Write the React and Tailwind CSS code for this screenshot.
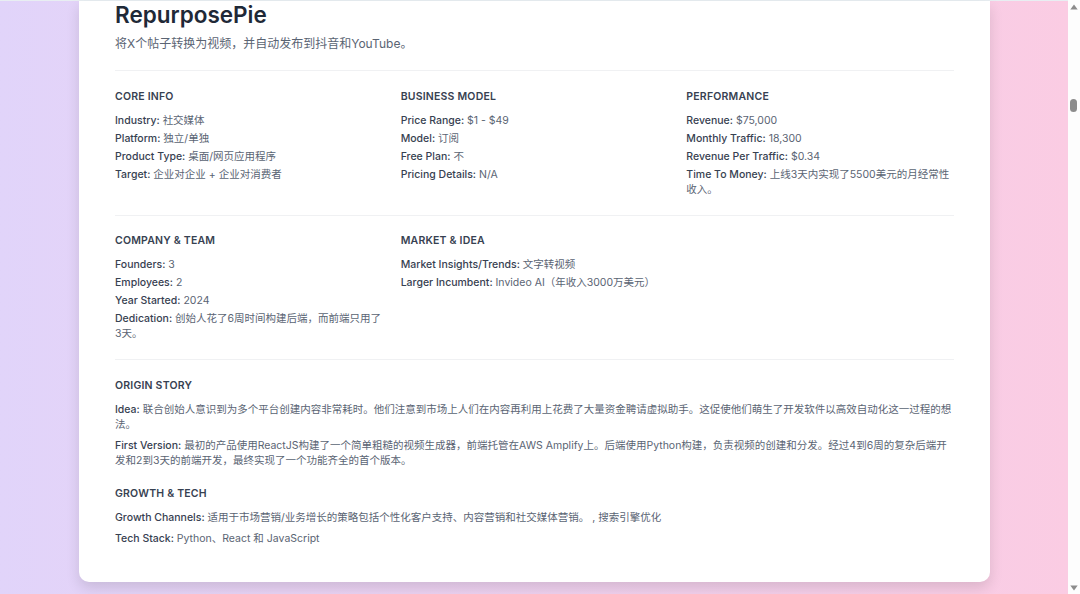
import React from "react";

const font = "font-['Inter','Noto_Sans_CJK_SC',sans-serif]";

const C = "\uFF0C";
const L = "\uFF08";
const R = "\uFF09";

function Row({ label, children }) {
  return (
    <p className="text-[10.5px] leading-[15px] text-[#5a6473]">
      <span className="font-medium text-[#374151]">{label}:</span> {children}
    </p>
  );
}

function Heading({ children }) {
  return <h3 className="mb-[7px] text-[10.5px] leading-[18px] font-semibold tracking-[0.2px] text-[#374151]">{children}</h3>;
}

function Section({ title, rows }) {
  return (
    <div>
      <Heading>{title}</Heading>
      <div className="flex flex-col gap-[3px]">
        {rows.map(([l, v]) => (
          <Row key={l} label={l}>{v}</Row>
        ))}
      </div>
    </div>
  );
}

export default function App() {
  return (
    <div className={`flex h-[594px] w-[1080px] overflow-hidden bg-white ${font}`}>
      <div className="h-full w-[1068px] border-t border-[#e8eef2] bg-gradient-to-r from-[#e1d4fa] to-[#fbcce3] px-[79px]">
        <main className="h-[581px] w-[911px] rounded-b-[10px] bg-white pr-[36px] pl-9 shadow-[0_6px_14px_rgba(0,0,0,0.12)]">
          <h1 className="text-[22.5px] leading-[28px] font-semibold text-[#1f2937]">RepurposePie</h1>
          <p className="mt-[6px] text-[12px] leading-[18px] text-[#5a6473]">{`将X个帖子转换为视频${C}并自动发布到抖音和YouTube。`}</p>

          <hr className="mt-[17px] border-[#f0f1f3]" />

          <div className="mt-[17px] grid grid-cols-3 gap-x-[18px]">
            <Section title="CORE INFO" rows={[["Industry", "社交媒体"], ["Platform", "独立/单独"], ["Product Type", "桌面/网页应用程序"], ["Target", "企业对企业 + 企业对消费者"]]} />
            <Section title="BUSINESS MODEL" rows={[["Price Range", "$1 - $49"], ["Model", "订阅"], ["Free Plan", "不"], ["Pricing Details", "N/A"]]} />
            <Section title="PERFORMANCE" rows={[["Revenue", "$75,000"], ["Monthly Traffic", "18,300"], ["Revenue Per Traffic", "$0.34"], ["Time To Money", "上线3天内实现了5500美元的月经常性收入。"]]} />
          </div>

          <hr className="mt-[17.5px] border-[#f0f1f3]" />

          <div className="mt-[16px] grid grid-cols-3 gap-x-[18px]">
            <Section title="COMPANY & TEAM" rows={[["Founders", "3"], ["Employees", "2"], ["Year Started", "2024"], ["Dedication", `创始人花了6周时间构建后端${C}而前端只用了3天。`]]} />
            <Section title="MARKET & IDEA" rows={[["Market Insights/Trends", "文字转视频"], ["Larger Incumbent", `Invideo AI${L}年收入3000万美元${R}`]]} />
          </div>

          <hr className="mt-[18.5px] border-[#f0f1f3]" />

          <div className="mt-[17px]">
            <Heading>ORIGIN STORY</Heading>
            <div className="flex flex-col gap-[6px]">
              <Row label="Idea">联合创始人意识到为多个平台创建内容非常耗时。他们注意到市场上人们在内容再利用上花费了大量资金聘请虚拟助手。这促使他们萌生了开发软件以高效自动化这一过程的想法。</Row>
              <Row label="First Version">{`最初的产品使用ReactJS构建了一个简单粗糙的视频生成器${C}前端托管在AWS Amplify上。后端使用Python构建${C}负责视频的创建和分发。经过4到6周的复杂后端开发和2到3天的前端开发${C}最终实现了一个功能齐全的首个版本。`}</Row>
            </div>
          </div>

          <div className="mt-[17px]">
            <Heading>GROWTH & TECH</Heading>
            <div className="flex flex-col gap-[6px]">
              <Row label="Growth Channels">适用于市场营销/业务增长的策略包括个性化客户支持、内容营销和社交媒体营销。 , 搜索引擎优化</Row>
              <Row label="Tech Stack">Python、React 和 JavaScript</Row>
            </div>
          </div>
        </main>
      </div>

      <div className="relative h-full w-3 bg-[#fdfdfd]">
        <svg className="absolute top-[4px] left-[2px]" width="8" height="6" viewBox="0 0 8 6"><path d="M4 0.5L7.7 5.5H0.3Z" fill="#8c8c8c" /></svg>
        <div className="absolute top-[99px] left-[2px] h-[13px] w-[7px] rounded-full bg-[#8c8c8c]" />
        <svg className="absolute bottom-[3px] left-[2px]" width="8" height="6" viewBox="0 0 8 6"><path d="M4 5.5L7.7 0.5H0.3Z" fill="#8c8c8c" /></svg>
      </div>
    </div>
  );
}
